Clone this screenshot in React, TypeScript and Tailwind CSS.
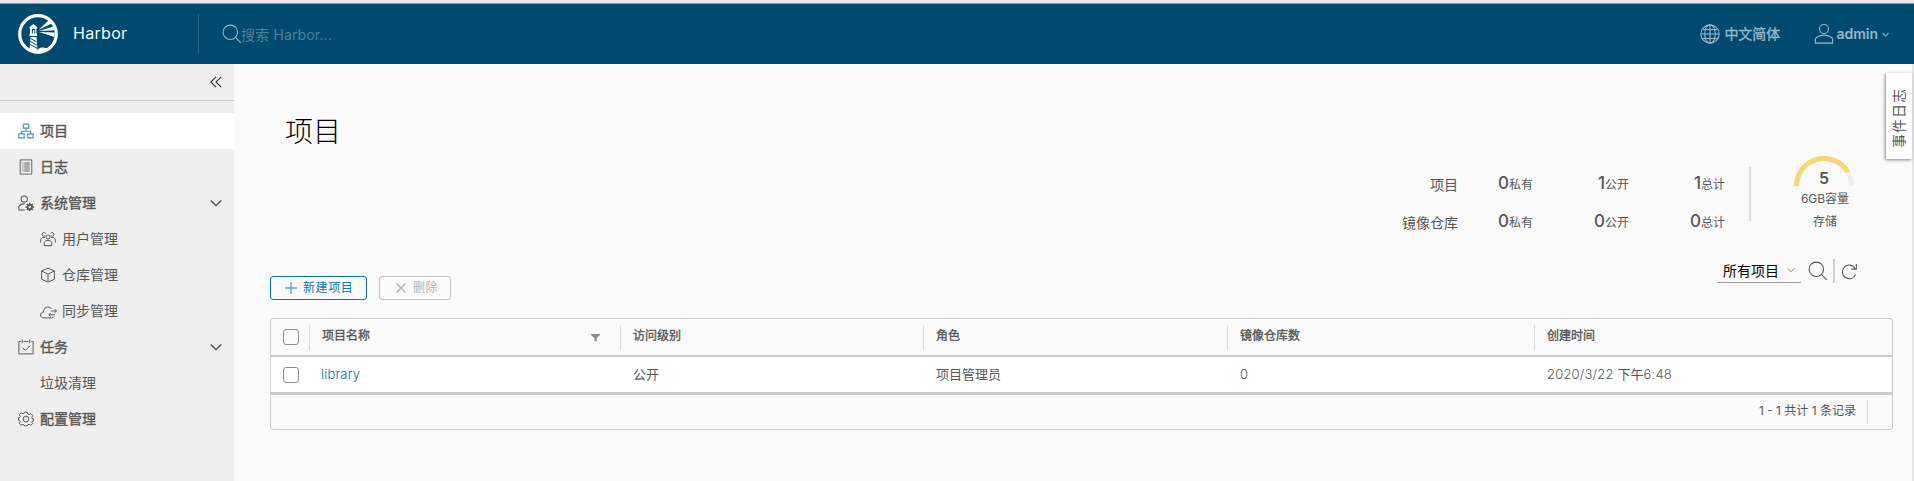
import React from "react";

type IconProps = { className?: string };

const Svg = ({ className = "", w = 2, children }: { className?: string; w?: number; children: React.ReactNode }) => (
  <svg viewBox="0 0 36 36" fill="none" stroke="currentColor" strokeWidth={w} className={`shrink-0 ${className}`}>
    {children}
  </svg>
);

const SearchIcon = ({ className }: IconProps) => (
  <Svg className={className}>
    <circle cx="15" cy="15" r="13" />
    <path d="M24.500 24.500 34 34" />
  </Svg>
);
const GlobeIcon = ({ className }: IconProps) => (
  <Svg className={className}>
    <circle cx="18" cy="18" r="16.500" />
    <path d="M18 2v32M2 18h32M5 10h26M5 26h26" />
    <ellipse cx="18" cy="18" rx="9.500" ry="16.500" />
  </Svg>
);
const UserIcon = ({ className }: IconProps) => (
  <Svg className={className}>
    <circle cx="18" cy="9" r="8" />
    <path d="M2.500 34.500v-8C7 21.500 12 20 18 20s11 1.500 15.500 6.500v8z" />
  </Svg>
);
const OrgIcon = ({ className }: IconProps) => (
  <Svg className={className} w={2.6}>
    <path d="M12 2.500h12v9H12zM2 24.500h12v9H2zM22 24.500h12v9H22zM18 12v6M7.500 24v-5.500h21V24" />
  </Svg>
);
const LogIcon = ({ className }: IconProps) => (
  <Svg className={className} w={2}>
    <path d="M5 2h26v32H5zM9.500 9h2.500M14 9h12.500M9.500 13.500h2.500M14 13.500h12.500M9.500 18h2.500M14 18h12.500M9.500 22.500h2.500M14 22.500h12.500M9.500 27h2.500M14 27h12.500" />
  </Svg>
);
const AdminIcon = ({ className }: IconProps) => (
  <Svg className={className} w={2.3}>
    <circle cx="14" cy="9" r="7" />
    <path d="M15 33.500H2v-7.500c3-4.500 7-6.500 12-6.500h1.500" />
    <circle cx="26.500" cy="27" r="5" strokeWidth="4" />
    <path d="M26.500 17.500v4M26.500 32.500v4M17 27h4M32 27h4M19.800 20.300l2.800 2.800M30.400 30.900l2.800 2.800M33.200 20.300l-2.800 2.800M22.600 30.900l-2.800 2.800" strokeWidth="3.500" />
  </Svg>
);
const UsersIcon = ({ className }: IconProps) => (
  <Svg className={className} w={2.2}>
    <circle cx="18" cy="13.500" r="4.500" />
    <path d="M9.500 33v-7.500c2-3 5-4.500 8.500-4.500s6.500 1.500 8.500 4.500V33z" />
    <path d="M12 10.500a4.200 4.200 0 1 1 .5-5M24 10.500a4.200 4.200 0 1 0-.5-5M1.500 26v-7.500c1.500-2.500 4-4 7-4 1 0 2 .2 3 .6M34.500 26v-7.500c-1.500-2.500-4-4-7-4-1 0-2 .2-3 .6" />
  </Svg>
);
const BoxIcon = ({ className }: IconProps) => (
  <Svg className={className} w={2.2}>
    <path d="M18 2.500 32.500 9v18.500L18 34 3.500 27.500V9zM3.500 9 18 16l14.500-7M18 16v18" />
  </Svg>
);
const CloudIcon = ({ className }: IconProps) => (
  <Svg className={className} w={2.1}>
    <path d="M30 28.500c-1 2-3 3-5.500 3H8C4 31.500 1.200 29 1.200 25.500c0-3.600 2.600-6.200 6.300-6.200C7.800 12.500 11.500 8.500 16.500 8.500c3.700 0 6.500 1.500 8 4.500" />
    <path d="M24 17h10.500M31 13l4 4-4 4M32 25H19M22.500 21.300 19 25l3.500 3.700" />
  </Svg>
);
const TaskIcon = ({ className }: IconProps) => (
  <Svg className={className} w={2.2}>
    <path d="M6 5.500H2v28h32v-28h-4M12.500 5.500h11M9.500 1v8.500M26.500 1v8.500M10.500 19.500l6 6 10-10" />
  </Svg>
);
const GearIcon = ({ className }: IconProps) => (
  <Svg className={className} w={2.2}>
    <circle cx="18" cy="18" r="6.500" />
    <path d="M15 2.500h6l1.200 4.300 2.800 1.200 4-2.200 4.200 4.200-2.200 4 1.200 2.800 2.300.700v5l-2.300.700L31 25.500l2.200 2.500-4.200 4.200-4-2.200-2.800 1.200L21 33.500h-6l-1.200-2.300L11 30l-4 2.200L2.800 28 5 24l-1.200-2.300-2.300-.700v-6l2.300-.700L5 12 2.800 8 7 3.800 11 6l2.800-1.200z" />
  </Svg>
);
const ChevronDown = ({ className, w = 4 }: IconProps & { w?: number }) => (
  <Svg className={className} w={w}>
    <path d="M2.500 10.500 18 26 33.500 10.500" />
  </Svg>
);
const RefreshIcon = ({ className }: IconProps) => (
  <Svg className={className} w={2.3}>
    <path d="M31 24A14.500 14.500 0 1 1 30 11.500M32.500 2v11H22" />
  </Svg>
);

const HarborLogo = () => (
  <svg viewBox="0 0 40 40" className="size-10 shrink-0">
    <circle cx="20" cy="20" r="18.300" fill="none" stroke="#fff" strokeWidth="3.200" />
    <path d="M15.500 10 19 13v1.500h-.600V19.500h.600v2.500h-7.500v-2.500h.600v-5h-.600V13z" fill="#fff" />
    <path d="M13.900 14.800h3.300v4.500h-3.300z" fill="#004a70" />
    <path d="M14.900 16h1.400v3h-1.400z" fill="#fff" />
    <path d="M12.500 23h6L19.500 38l-8-2z" fill="#fff" />
    <path d="m12.500 24.500 6 3.200M12.300 27.500l6.500 3.500M12 30.500l7 3.700" stroke="#004a70" strokeWidth="1" />
    <path d="M20.500 16 30.500 6.500l3.500 2.800zM21 17l14.500-4.500 1 3.700zM21 18l15.500.5v4.500z" fill="#fff" />
    <path d="M19 38c.5-3.500 3-5 6.500-4.500l5 1.500c-3 2.300-7 3-11.500 3z" fill="#fff" />
  </svg>
);

const NavItem = ({ icon, label, active, bold, nested, expandable }: { icon?: React.ReactNode; label: string; active?: boolean; bold?: boolean; nested?: boolean; expandable?: boolean }) => (
  <a className={`flex h-9 items-center pr-3 ${nested ? "pl-10" : "pl-[18px]"} ${active ? "bg-white" : ""}`}>
    <span className="flex w-[22px] shrink-0">{icon}</span>
    <span className={`flex-1 text-[14px] leading-5 ${bold ? "[-webkit-text-stroke:0.35px_currentColor]" : ""}`}>{label}</span>
    {expandable && <ChevronDown className="size-3" w={4.5} />}
  </a>
);

const Stat = ({ value, label }: { value: number; label: string }) => (
  <div className="flex w-24 items-baseline justify-end text-[12px] leading-6">
    <span className="text-[17px] font-medium">{value}</span>
    {label}
  </div>
);

const StatRow = ({ title, values }: { title: string; values: number[] }) => (
  <div className="flex h-[38px] items-center">
    <span className="w-14 pt-[3px] text-right text-[14px]">{title}</span>
    <div className="-ml-[21px] flex pt-[2px]">
      <Stat value={values[0]} label="私有" />
      <Stat value={values[1]} label="公开" />
      <Stat value={values[2]} label="总计" />
    </div>
  </div>
);

const Checkbox = () => <span className="block size-4 rounded-[3px] border border-[#8c8c8c]" />;

const grid = "grid grid-cols-[38px_311px_303px_304px_307px_1fr]";

const HeadCell = ({ label, filter }: { label: string; filter?: boolean }) => (
  <div className="flex h-[25px] justify-between border-l border-[#ddd] pl-[12px] pr-[20px] text-[12px] leading-[22px]">
    <span className="[-webkit-text-stroke:0.35px_currentColor]">{label}</span>
    {filter && (
      <svg viewBox="0 0 9 8" className="mt-[9px] h-2 w-[9px] text-[#8c8c8c]" fill="currentColor">
        <path d="M0 0h9v1L5.700 4v4L3.300 6.500V4L0 1z" />
      </svg>
    )}
  </div>
);

export default function App() {
  return (
    <div className="flex h-[481px] w-full flex-col overflow-hidden bg-[#fafafa] font-[Inter,'Noto_Sans_CJK_SC',sans-serif] text-[#565656]">
      <div className="h-1 shrink-0 border-b border-[#999] bg-[#e6e6e6]" />
      <header className="flex h-[60px] shrink-0 items-center bg-[#004a70] pl-[18px] text-[#99b7c6]">
        <HarborLogo />
        <span className="ml-[15px] w-[125px] pb-[2px] text-[16px] leading-6 tracking-[0.3px] text-[#fafafa]">Harbor</span>
        <span className="h-10 w-px bg-[#266587]" />
        <div className="ml-[23px] flex flex-1 items-center text-[14px]">
          <SearchIcon className="size-5" />
          <span className="-ml-px pt-px tracking-[0.15px] text-[#4d809b]">搜索 Harbor...</span>
        </div>
        <GlobeIcon className="size-5" />
        <span className="ml-1 mr-px pb-px text-[14px] [-webkit-text-stroke:0.35px_currentColor]">中文简体</span>
        <UserIcon className="ml-[33px] size-5" />
        <span className="ml-[2px] pb-px text-[14px] font-semibold">admin</span>
        <ChevronDown className="ml-1 mr-[25px] size-[7px]" w={5.5} />
      </header>

      <div className="flex min-h-0 flex-1">
        <aside className="w-[234px] shrink-0 bg-[#eee]">
          <div className="flex h-[37px] items-center justify-end border-b border-[#ccc] pr-3">
            <svg viewBox="0 0 12 12" className="size-3" fill="none" stroke="#333" strokeWidth="1.100">
              <path d="M6 .8.8 6 6 11.200M11.200.8 6 6l5.200 5.200" />
            </svg>
          </div>
          <nav className="pt-3">
            <NavItem icon={<OrgIcon className="size-4 text-[#3d95c9]" />} label="项目" active bold />
            <NavItem icon={<LogIcon className="size-4" />} label="日志" bold />
            <NavItem icon={<AdminIcon className="size-4" />} label="系统管理" bold expandable />
            <NavItem icon={<UsersIcon className="size-4" />} label="用户管理" nested />
            <NavItem icon={<BoxIcon className="size-4" />} label="仓库管理" nested />
            <NavItem icon={<CloudIcon className="size-[17px]" />} label="同步管理" nested />
            <NavItem icon={<TaskIcon className="size-4" />} label="任务" bold expandable />
            <NavItem label="垃圾清理" />
            <NavItem icon={<GearIcon className="size-4" />} label="配置管理" bold />
          </nav>
        </aside>

        <main className="flex min-w-0 flex-1 flex-col border-r-2 border-[#e4e4e4] pl-9">
          <div className="flex h-[85px] items-start justify-between pl-[15px]">
            <h1 className="pt-[48px] text-[28px] font-light leading-10 text-black">项目</h1>
            <div className="mt-[9px] flex h-[86px] w-[26px] items-center justify-center bg-white pl-[4px] pt-[3px] text-[14px] shadow-[-1px_1px_3px_#888]">
              <span className="rotate-180 leading-4 tracking-[1px] [writing-mode:vertical-rl]"><span className="inline-block [text-orientation:sideways]">事件日志</span></span>
            </div>
          </div>

          <div className="flex h-[100px] justify-end pr-[58px]">
            <div className="flex pt-[15px]">
              <div>
                <StatRow title="项目" values={[0, 1, 1]} />
                <StatRow title="镜像仓库" values={[0, 0, 0]} />
              </div>
              <div className="ml-6 mt-[3px] h-[54px] w-0.5 bg-[#ddd]" />
            </div>
            <div className="ml-[43px] flex w-[60px] flex-col items-center pt-[7px] text-[12px]">
              <svg viewBox="0 0 60 30" className="h-[30px] w-[60px]" fill="none" strokeWidth="5">
                <path d="M2.500 30a27.500 27.500 0 0 1 55 0" stroke="#eee" />
                <path d="M2.500 30A27.500 27.500 0 0 1 53.800 16.200" stroke="#f5d876" />
              </svg>
              <span className="-mt-[18px] text-[16px] font-semibold leading-5">5</span>
              <span className="mt-[2px] pl-[2px] leading-[18px]">6GB容量</span>
              <span className="mt-[5px] pl-[2px] leading-[18px]">存储</span>
            </div>
          </div>

          <div className="flex h-[69px] items-start justify-between pr-[54px]">
            <div className="flex gap-3 pt-[27px] text-[12px]">
              <button className="flex h-6 w-[97px] items-center gap-[6px] rounded-[3px] border border-[#0079b8] pl-[14px] text-[#0079b8]">
                <svg viewBox="0 0 12 12" className="size-3" stroke="#5fabd2" strokeWidth="1.500"><path d="M6 0v12M0 6h12" /></svg>
                <span className="tracking-[0.6px]">新建项目</span>
              </button>
              <button className="flex h-6 w-[72px] items-center gap-[7px] rounded-[3px] border border-[#c1c1c1] pl-[16px] text-[#b5b5b5]">
                <svg viewBox="0 0 10 10" className="size-2.5" stroke="#aaa" strokeWidth="1.100"><path d="m.5.5 9 9m0-9-9 9" /></svg>
                <span className="tracking-[0.5px]">删除</span>
              </button>
            </div>
            <div className="flex items-center pt-[10px]">
              <div className="mt-px flex h-[23px] w-[84px] items-center justify-between border-b border-[#999] px-[6px] pb-[2px] text-[14px] text-black">
                所有项目
                <ChevronDown className="size-2 text-[#888]" w={4.5} />
              </div>
              <SearchIcon className="ml-[7px] size-5" />
              <span className="ml-[5px] h-6 w-0.5 bg-[#ccc]" />
              <RefreshIcon className="ml-[6px] size-[17px]" />
            </div>
          </div>

          <section className="mr-[19px] flex h-[112px] flex-col overflow-hidden rounded-[3px] border border-[#ccc] text-[13px]">
            <div className={`${grid} h-[38px] border-b-2 border-[#ccc] pt-1.5`}>
              <div className="pl-3 pt-1"><Checkbox /></div>
              <HeadCell label="项目名称" filter />
              <HeadCell label="访问级别" />
              <HeadCell label="角色" />
              <HeadCell label="镜像仓库数" />
              <HeadCell label="创建时间" />
            </div>
            <div className={`${grid} h-[38px] items-center border-b-[3px] border-[#ccc] bg-white`}>
              <div className="flex pl-3"><Checkbox /></div>
              <a className="pl-3 font-light tracking-[0.2px] text-[#0b67ae]">library</a>
              <span className="pl-[13px]">公开</span>
              <span className="pl-[13px]">项目管理员</span>
              <span className="pl-[13px] font-light">0</span>
              <span className="pl-[13px]">
                <span className="font-light tracking-[0.2px]">2020/3/22 </span>下午<span className="font-light tracking-[0.2px]">6:48</span>
              </span>
            </div>
            <div className="flex flex-1 justify-end pt-[5px] text-[12px]">
              <span className="h-6 border-r border-[#ddd] pr-[11px] leading-[22px]">1 - 1 共计 1 条记录</span>
              <span className="w-6" />
            </div>
          </section>
        </main>
      </div>
    </div>
  );
}
